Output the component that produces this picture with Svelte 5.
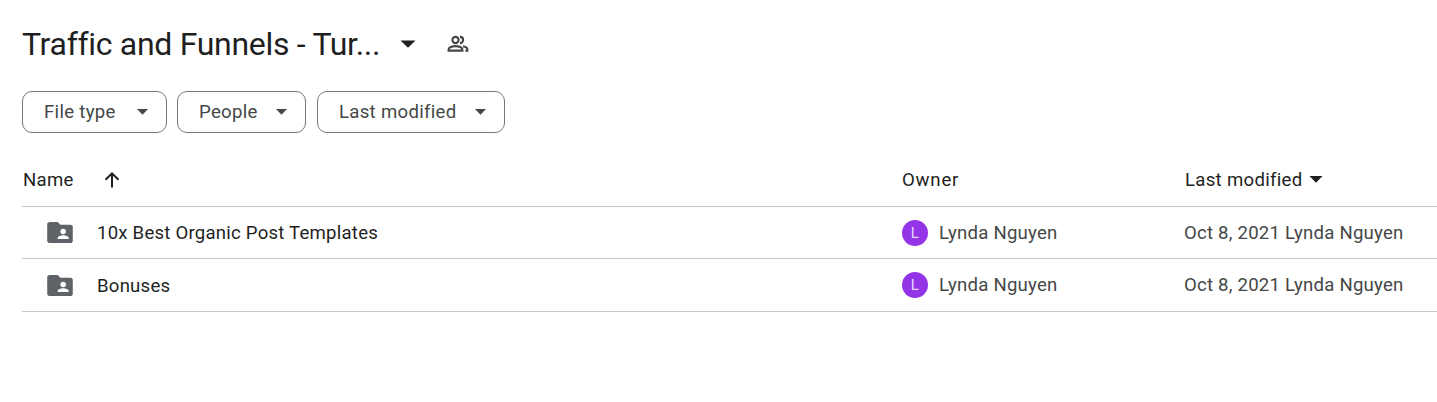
<script>
  const rows = [
    { name: "10x Best Organic Post Templates" },
    { name: "Bonuses" }
  ];
  const filters = ["File type", "People", "Last modified"];
</script>

<main class="page">
  <header class="title-row">
    <h1>Traffic and Funnels - Tur...</h1>
    <svg class="title-caret" width="16" height="8" viewBox="0 0 16 8"><path d="M0.5 0.5h15L8 7.8z" fill="#1f1f1f" /></svg>
    <svg class="shared" width="24" height="24" viewBox="0 0 24 24" fill="none" stroke="#444746" stroke-width="2.1">
      <circle cx="9.500" cy="8" r="3.100" />
      <path d="M2.600 18.600v-1.200c0-1.900 3.400-3.300 6.900-3.300s6.900 1.400 6.900 3.300v1.200z" />
      <path d="M14 4.900c1.800 0 3.100 1.400 3.100 3.100s-1.300 3.100-3.100 3.100" />
      <path d="M17 14.300c2.500.5 4.400 1.600 4.400 3.100v1.200h-2" />
    </svg>
  </header>

  <div class="filters">
    {#each filters as f}
      <button class="chip">
        <span>{f}</span>
        <svg width="11" height="6" viewBox="0 0 11 6"><path d="M0 0h11L5.500 5.800z" fill="#444746" /></svg>
      </button>
    {/each}
  </div>

  <div class="table">
    <div class="row head">
      <div class="col-name">
        <span>Name</span>
        <svg class="arrow" width="18" height="18" viewBox="0 0 18 18" fill="none" stroke="#1f1f1f" stroke-width="2"><path d="M9 16.500V2.500M2.500 8.800L9 2.300l6.500 6.500" /></svg>
      </div>
      <div class="col-owner">Owner</div>
      <div class="col-mod">
        <span>Last modified</span>
        <svg width="14" height="7" viewBox="0 0 14 7"><path d="M0.500 0h13L7 6.800z" fill="#1f1f1f" /></svg>
      </div>
    </div>
    {#each rows as r}
      <div class="row item">
        <div class="col-name">
          <svg class="folder" width="26" height="21" viewBox="0 0 28 23">
            <path d="M3 0h8.500l3 3h11c1.300 0 2.500 1 2.500 2.300v15.400c0 1.300-1.200 2.300-2.500 2.300H3c-1.300 0-3-1-3-2.300V2.300C0 1 1.700 0 3 0z" fill="#5f6368" />
            <circle cx="17.500" cy="10.500" r="3" fill="#fff" />
            <path d="M11.500 18.500v-1.200c0-1.900 3.600-2.900 6-2.900s6 1 6 2.900v1.200z" fill="#fff" />
          </svg>
          <span class="file">{r.name}</span>
        </div>
        <div class="col-owner">
          <span class="avatar">L</span>
          <span class="muted">Lynda Nguyen</span>
        </div>
        <div class="col-mod muted">Oct 8, 2021 Lynda Nguyen</div>
      </div>
    {/each}
  </div>
</main>

<style>
  :global(body) {
    margin: 0;
    background: #fff;
  }

  .page {
    height: 402px;
    box-sizing: border-box;
    padding: 20px 0 0 22px;
    font-family: Roboto, "Liberation Sans", sans-serif;
    color: #1f1f1f;
    overflow: hidden;
  }

  .title-row {
    display: flex;
    align-items: center;
    height: 48px;
  }

  h1 {
    margin: 0;
    width: 378px;
    flex: none;
    font-size: 32px;
    font-weight: 400;
    line-height: 48px;
    letter-spacing: -0.3px;
    white-space: nowrap;
  }

  .shared {
    margin-left: 30px;
  }

  .filters {
    display: flex;
    margin-top: 23px;
  }

  .chip {
    display: flex;
    align-items: center;
    justify-content: space-between;
    box-sizing: border-box;
    height: 42px;
    padding: 0 18px 0 21px;
    background: #fff;
    border: 1px solid #747775;
    border-radius: 10px;
    font: inherit;
    font-size: 18.600px;
    letter-spacing: 0.3px;
    line-height: 22px;
    color: #444746;
  }

  .chip:nth-child(1) { width: 145px; margin-right: 10px; }
  .chip:nth-child(2) { width: 129px; margin-right: 11px; }
  .chip:nth-child(3) { width: 188px; }

  .table {
    margin-top: 20px;
  }

  .row {
    display: grid;
    grid-template-columns: 880px 282px 1fr;
    align-items: center;
    box-sizing: border-box;
    border-bottom: 1px solid #c7c7c7;
    font-size: 18.600px;
    letter-spacing: 0.22px;
  }

  .head {
    height: 54px;
    border-bottom-color: #c4c7c5;
    letter-spacing: 0.3px;
  }

  .item {
    height: 52px;
  }

  .item:last-child {
    height: 53px;
  }

  .item:last-child .file {
    padding-top: 2px;
  }

  .col-name,
  .col-owner,
  .col-mod {
    display: flex;
    align-items: center;
  }

  .head .col-name span {
    margin-left: 1px;
  }

  .head .col-owner {
    letter-spacing: 0.8px;
  }

  .arrow {
    margin-left: 29px;
  }

  .head .col-mod span {
    margin-left: 1px;
  }

  .head .col-mod svg {
    margin-left: 6px;
  }

  .folder {
    margin-left: 25px;
    flex: none;
  }

  .file {
    margin-left: 24px;
    color: #1f1f1f;
  }

  .avatar {
    display: flex;
    align-items: center;
    justify-content: center;
    width: 26px;
    height: 26px;
    margin-right: 11px;
    border-radius: 50%;
    background: #9334e6;
    color: #e9d5fb;
    font-size: 15px;
  }

  .muted {
    color: #444746;
  }
</style>
